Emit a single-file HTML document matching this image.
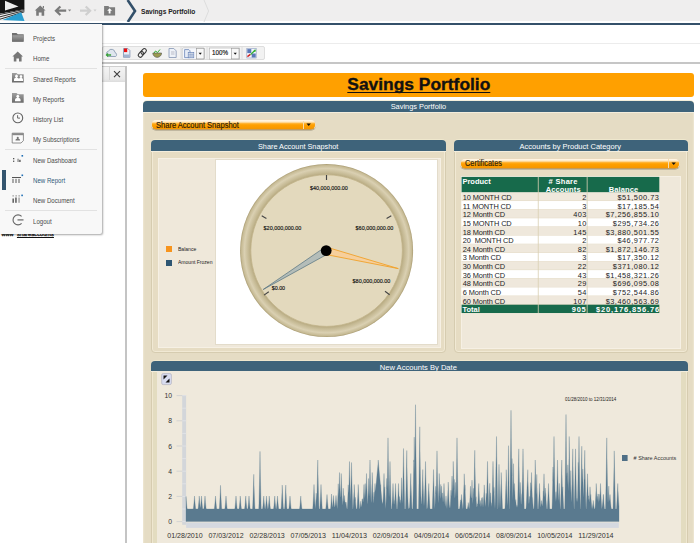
<!DOCTYPE html>
<html><head><meta charset="utf-8">
<style>
*{margin:0;padding:0;box-sizing:border-box}
html,body{width:700px;height:543px;overflow:hidden;background:#fff}
body{position:relative;font-family:"Liberation Sans",sans-serif;color:#333}
.a{position:absolute}
.t{position:absolute;white-space:nowrap;line-height:1}
</style></head><body>
<!-- top bar -->
<div class="a" style="left:0;top:0;width:700px;height:21px;background:#efeeee"></div>
<div class="a" style="left:0;top:22.5px;width:700px;height:2.2px;background:#34506a"></div>
<!-- logo -->
<svg class="a" style="left:0;top:0" width="26" height="22" viewBox="0 0 26 22">
<polygon points="0,0 24.4,0 24.4,9.2 0,13.8" fill="#141414"/>
<polygon points="0,13.8 24.4,9.2 24.4,12.5 2,21 0,21" fill="#f2f2f2"/>
<polygon points="5,0.7 18.5,6.6 5,10.6" fill="#ececec"/>
<g stroke="#1a1a1a" stroke-width="0.9">
<line x1="24.4" y1="9.4" x2="0" y2="14.4"/>
<line x1="24.4" y1="10.6" x2="0" y2="16.8"/>
<line x1="24.4" y1="11.8" x2="0" y2="19.2"/>
</g>
<polygon points="2.4,20 21.2,12.2 24.5,21" fill="#2b9fd1"/>
</svg>
<!-- nav icons -->
<svg class="a" style="left:30px;top:3px" width="100" height="16" viewBox="30 3 100 16">
<!-- home -->
<path d="M40.2,5.4 L45.6,10.6 L44.2,10.6 L44.2,15.7 L41.6,15.7 L41.6,12.6 L38.8,12.6 L38.8,15.7 L36.2,15.7 L36.2,10.6 L34.8,10.6 Z M42.8,6 h1.2 v2.6 l-1.2,-1.2z" fill="#7a7a7a"/>
<!-- back -->
<path d="M54.4,10.7 L59.6,5.7 L61.2,7.2 L58.6,9.6 L66.2,9.6 L66.2,11.8 L58.6,11.8 L61.2,14.2 L59.6,15.7 Z" fill="#7a7a7a"/>
<path d="M68,9.4 h3.2 l-1.6,2z" fill="#888"/>
<!-- forward -->
<path d="M91.7,10.7 L86.5,5.7 L84.9,7.2 L87.5,9.6 L80,9.6 L80,11.8 L87.5,11.8 L84.9,14.2 L86.5,15.7 Z" fill="#cfcfcf"/>
<path d="M93.5,9.4 h3 l-1.5,2z" fill="#ccc"/>
<!-- folder up -->
<path d="M104.1,6 h4.2 l1.2,1.3 h5.6 v8.1 h-11z" fill="#7d7d7d"/>
<path d="M109.6,8.2 l2.4,2.6 h-1.5 v2.8 h-1.8 v-2.8 h-1.5z" fill="#fff"/>
</svg>
<!-- breadcrumb chevrons -->
<svg class="a" style="left:120px;top:0" width="100" height="22" viewBox="120 0 100 22">
<path d="M127.6,0 L135,11 L127.8,22" fill="none" stroke="#33506a" stroke-width="2.6"/>
<path d="M204,0 L208.6,11 L204,22" fill="none" stroke="#dcdcdc" stroke-width="1"/>
</svg>
<div class="t" style="left:141.4px;top:8.2px;font-size:7.3px;font-weight:bold;color:#222;transform:scaleX(0.905);transform-origin:0 0">Savings Portfolio</div>

<!-- toolbar -->
<div class="a" style="left:0;top:42.6px;width:700px;height:1px;background:#ececec"></div>
<div class="a" style="left:0;top:62px;width:700px;height:1.8px;background:#c6c6c6"></div>
<div class="a" style="left:102px;top:45.8px;width:163px;height:14.6px;background:#f2f2f2;border:1px solid #dedede;border-radius:2px"></div>
<svg class="a" style="left:100px;top:44px" width="170" height="18" viewBox="100 44 170 18">
<!-- cloud -->
<path d="M108,56.5 a3,3 0 0 1 0.5,-5.5 a3.5,3.5 0 0 1 6.5,1.5 a2.3,2.3 0 0 1 0.7,4z" fill="#dfe6ee" stroke="#8c9db3" stroke-width="0.9"/>
<path d="M105.5,55 l2.6,-2.2 v1.4 h3 v1.6 h-3 v1.4z" fill="#3aa13a"/>
<!-- pdf -->
<path d="M123.5,48.5 h4.4 l2,2 v6.8 h-6.4z" fill="#e8eef6" stroke="#7c8fb0" stroke-width="0.8"/>
<rect x="124" y="48.5" width="3.2" height="3.6" fill="#e11"/>
<rect x="123.8" y="54.5" width="5.8" height="2.6" fill="#9fb3d0"/>
<!-- link -->
<g transform="rotate(-48 142.3 52.9)" fill="none" stroke="#3a3a3a" stroke-width="1.1">
<rect x="137.2" y="50.9" width="6.2" height="4" rx="2"/>
<rect x="141.2" y="50.9" width="6.2" height="4" rx="2"/>
</g>
<!-- bowl -->
<path d="M152.8,53 h8.8 a4.4,4.4 0 0 1 -8.8,0z" fill="#9a9a50" stroke="#555" stroke-width="0.6"/>
<path d="M154,53 l1.5,-2 l2,1.5 l2.5,-3" stroke="#3a3" stroke-width="1" fill="none"/>
<!-- doc -->
<path d="M169,48.5 h4.8 l2.4,2.4 v6.6 h-7.2z" fill="#eef2f8" stroke="#8494b4" stroke-width="0.8"/>
<path d="M171,52 h3.5 M171,54 h3.5" stroke="#99a" stroke-width="0.6"/>
<!-- sep -->
<line x1="181" y1="47" x2="181" y2="59.5" stroke="#d8d8d8" stroke-width="0.8"/>
<rect x="182.3" y="48" width="22" height="11.2" fill="#e6e6e6" stroke="#b5b5b5" stroke-width="0.7" rx="1"/>
<rect x="182.6" y="48.3" width="13.5" height="10.6" fill="#f5f7fb"/>
<path d="M184.6,49.6 h4.2 l1.2,1.2 v6.8 h-5.4z" fill="#e6ecf6" stroke="#5a78b0" stroke-width="0.7"/>
<rect x="188.2" y="52.6" width="5.6" height="5.2" fill="#ffffff" stroke="#5a78b0" stroke-width="0.6"/>
<path d="M188.2,54.3 h5.6 M188.2,56 h5.6 M190.1,52.6 v5.2 M192,52.6 v5.2" stroke="#5a78b0" stroke-width="0.5"/>
<rect x="196.4" y="48.3" width="7.6" height="10.6" fill="#f8f8f8" stroke="#9a9a9a" stroke-width="0.6"/>
<path d="M198.6,52.8 h3.2 l-1.6,2z" fill="#111"/>
<line x1="207" y1="47" x2="207" y2="59.5" stroke="#d8d8d8" stroke-width="0.8"/>
<rect x="209.3" y="48" width="30" height="11.2" fill="#fff" stroke="#b5b5b5" stroke-width="0.7"/>
<rect x="231.4" y="48.3" width="7.6" height="10.6" fill="#f8f8f8" stroke="#9a9a9a" stroke-width="0.6"/>
<path d="M233.6,52.8 h3.2 l-1.6,2z" fill="#111"/>
<line x1="242" y1="47" x2="242" y2="59.5" stroke="#d8d8d8" stroke-width="0.8"/>
<rect x="246.8" y="48.6" width="9.4" height="9.4" fill="#f4f6fb" stroke="#8a9cc0" stroke-width="0.6"/>
<rect x="247.3" y="49.1" width="4" height="4" fill="#5a78b8"/>
<rect x="251.7" y="53.5" width="4" height="4" fill="#5a78b8"/>
<path d="M247.4,56.6 l3,-2.2" stroke="#d02020" stroke-width="1.4"/>
<path d="M250.6,54.6 l4.6,-4.6" stroke="#30b030" stroke-width="1.3"/>
<path d="M255.6,49.2 v2.6 h-2.6z" fill="#30b030"/>
</svg>
<div class="t" style="left:211.6px;top:50.4px;font-size:6.6px;color:#111;-webkit-text-stroke:0.15px #111;transform:scaleX(0.95);transform-origin:0 0">100%</div>

<!-- left panel -->
<div class="a" style="left:0;top:66px;width:126.5px;height:16px;background:linear-gradient(#f4f4f4,#e9e9e9 80%,#dcdcdc);border-top:1px solid #cfcfcf"></div>
<div class="a" style="left:109px;top:67px;width:0.8px;height:13px;background:#d6d6d6"></div>
<svg class="a" style="left:112px;top:69px" width="10" height="10" viewBox="112 69 10 10">
<path d="M114,71.2 L120,77.2 M120,71.2 L114,77.2" stroke="#404040" stroke-width="1.15"/>
</svg>
<div class="a" style="left:125px;top:66px;width:1.8px;height:477px;background:#c4c4c4"></div>
<div class="t" style="left:1.5px;top:232.4px;font-size:5.6px;color:#111;-webkit-text-stroke:0.25px #111">www<u style="margin-left:3.3px;letter-spacing:0.05px">shareaccounts</u></div>

<!-- dropdown menu -->
<div class="a" style="left:0;top:24px;width:102px;height:210px;background:#f8f8f8;border-radius:0 0 2px 0;box-shadow:1px 1px 2px rgba(0,0,0,0.35)"></div>
<div class="a" style="left:5px;top:68.2px;width:92px;height:0.8px;background:#e2e2e2"></div>
<div class="a" style="left:5px;top:149.3px;width:92px;height:0.8px;background:#e2e2e2"></div>
<div class="a" style="left:5px;top:210px;width:92px;height:0.8px;background:#e2e2e2"></div>
<div class="a" style="left:2.3px;top:170.2px;width:4px;height:19.4px;background:#34556f"></div>
<svg class="a" style="left:0;top:24px" width="30" height="206" viewBox="0 24 30 206">
<defs><linearGradient id="ig" x1="0" y1="0" x2="0" y2="1"><stop offset="0" stop-color="#a0a0a0"/><stop offset="1" stop-color="#6a6a6a"/></linearGradient></defs>
<!-- projects folder -->
<path d="M12,33 h4.5 l1.3,1.2 h5.9 v7.6 h-11.7z" fill="#6f6f6f"/>
<path d="M12.3,35.2 h11.1 v6.4 h-11.1z" fill="url(#ig)"/>
<!-- home -->
<path d="M17.7,51.4 L23,56.6 L21.6,56.6 L21.6,61.6 L19,61.6 L19,58.6 L16.4,58.6 L16.4,61.6 L13.8,61.6 L13.8,56.6 L12.4,56.6 Z" fill="#777"/>
<!-- shared reports -->
<path d="M12,73 h4.5 l1.3,1.2 h5.9 v8.3 h-11.7z" fill="url(#ig)"/>
<path d="M14,81 v-1.5 q0,-1.5 2,-2 a1.4,1.4 0 1 1 1,0 q2,0.5 2,2 v1.5z M18.5,81 v-1.5 q0,-1.3 2,-1.8 a1.3,1.3 0 1 1 1,0 q1.5,0.5 1.5,1.8 v1.5z" fill="#fff"/>
<!-- my reports -->
<path d="M12,93 h4.5 l1.3,1.2 h5.9 v8.5 h-11.7z" fill="url(#ig)"/>
<path d="M15,101.3 v-1.5 q0,-1.6 2.2,-2.1 a1.5,1.5 0 1 1 1.2,0 q2.2,0.5 2.2,2.1 v1.5z" fill="#fff"/>
<!-- clock -->
<circle cx="17.8" cy="117.9" r="4.9" fill="none" stroke="#666" stroke-width="1.1"/>
<path d="M17.6,115.2 v2.9 h2.4" fill="none" stroke="#666" stroke-width="1"/>
<!-- subscriptions -->
<path d="M12.2,133.2 h11.2 v7.5 l-2.4,2.3 h-8.8z" fill="#fafafa" stroke="#777" stroke-width="0.8"/>
<rect x="12.2" y="133.2" width="11.2" height="2" fill="#888"/>
<path d="M15.5,140.5 h4.5 v-0.8 q-0.5,-1 -1.6,-1.2 a1,1 0 1 0 -1.3,0 q-1.1,0.2 -1.6,1.2z" fill="#777"/>
<!-- new dashboard -->
<rect x="13" y="158" width="1.3" height="1.3" fill="#555"/>
<rect x="13" y="160.6" width="1.3" height="1.3" fill="#555"/>
<rect x="17.5" y="158.7" width="1.1" height="3.3" fill="#777"/>
<rect x="19.2" y="159.8" width="1.4" height="2.2" fill="#555"/>
<rect x="21.5" y="155" width="1.6" height="1.6" fill="#1f6fb5"/>
<!-- new report -->
<rect x="12" y="177" width="9" height="1" fill="#555"/>
<rect x="12.3" y="178.8" width="1.4" height="4.2" fill="#888"/>
<rect x="15.3" y="178.8" width="1.4" height="4.2" fill="#888"/>
<rect x="18.3" y="178.8" width="1.4" height="4.2" fill="#888"/>
<rect x="21.5" y="174.5" width="1.6" height="1.6" fill="#1f6fb5"/>
<!-- new document -->
<rect x="12.6" y="195.4" width="1" height="1" fill="#555"/>
<rect x="15.6" y="195.4" width="1" height="1" fill="#555"/>
<rect x="18.6" y="195.4" width="1" height="1" fill="#555"/>
<rect x="12.5" y="198.5" width="1.3" height="4.3" fill="#444"/>
<rect x="15.3" y="197.5" width="1.3" height="5.3" fill="#444"/>
<rect x="18.4" y="197.5" width="1.3" height="5.3" fill="#999"/>
<rect x="21.3" y="194.6" width="1.6" height="1.6" fill="#1f6fb5"/>
<!-- logout -->
<path d="M21.6,216.4 A5,5 0 1 0 21.6,223.4" fill="none" stroke="#666" stroke-width="1.1"/>
<path d="M17.5,219.9 h6" stroke="#666" stroke-width="1.2"/>
</svg>
<div class="t" style="left:33.1px;top:35.85px;font-size:6.9px;transform:scaleX(0.885);transform-origin:0 0;color:#4a4a4a">Projects</div>
<div class="t" style="left:33.1px;top:56.45px;font-size:6.9px;transform:scaleX(0.885);transform-origin:0 0;color:#4a4a4a">Home</div>
<div class="t" style="left:33.1px;top:77.15px;font-size:6.9px;transform:scaleX(0.885);transform-origin:0 0;color:#4a4a4a">Shared Reports</div>
<div class="t" style="left:33.1px;top:96.55px;font-size:6.9px;transform:scaleX(0.885);transform-origin:0 0;color:#4a4a4a">My Reports</div>
<div class="t" style="left:33.1px;top:116.85px;font-size:6.9px;transform:scaleX(0.885);transform-origin:0 0;color:#4a4a4a">History List</div>
<div class="t" style="left:33.1px;top:136.75px;font-size:6.9px;transform:scaleX(0.885);transform-origin:0 0;color:#4a4a4a">My Subscriptions</div>
<div class="t" style="left:33.1px;top:157.95px;font-size:6.9px;transform:scaleX(0.885);transform-origin:0 0;color:#4a4a4a">New Dashboard</div>
<div class="t" style="left:33.1px;top:177.75px;font-size:6.9px;transform:scaleX(0.885);transform-origin:0 0;color:#2f5878">New Report</div>
<div class="t" style="left:33.1px;top:197.95px;font-size:6.9px;transform:scaleX(0.885);transform-origin:0 0;color:#4a4a4a">New Document</div>
<div class="t" style="left:33.1px;top:218.55px;font-size:6.9px;transform:scaleX(0.885);transform-origin:0 0;color:#4a4a4a">Logout</div>

<!-- main content -->
<div class="a" style="left:143px;top:73px;width:551px;height:24px;background:#ffa000;border-radius:3px"></div>
<div class="t" style="left:347.3px;top:76px;font-size:17.4px;font-weight:bold;color:#111;text-decoration:underline;text-decoration-thickness:1.1px;text-underline-offset:2.2px;text-decoration-skip-ink:none;-webkit-text-stroke:0.35px #111">Savings Portfolio</div>

<div class="a" style="left:143.3px;top:101px;width:550.7px;height:442px;background:#e5dcc4;border-radius:4px 4px 0 0;box-shadow:inset 1.2px 0 0 #ece4cf,inset -1.2px 0 0 #ece4cf"></div>
<div class="a" style="left:144.3px;top:111.6px;width:548.7px;height:1.2px;background:#efe8d6"></div>
<div class="a" style="left:143.3px;top:101px;width:550.7px;height:10.6px;background:#3e637a;border-radius:4px 4px 0 0;box-shadow:0 -0.8px 0 #f1ead0,0 0.9px 0 #f3eddc"></div>
<div class="t" style="left:390.7px;top:103px;font-size:7.4px;color:#fff">Savings Portfolio</div>

<!-- select 1 -->
<div class="a" style="left:150.5px;top:118.9px;width:165px;height:11.5px;border-radius:5px;background:linear-gradient(#fff8ec 0%,#ffe8c0 22%,#ffb02c 40%,#ffa000 55%,#f59600 100%);border:0.8px solid #eadbc0;border-bottom-color:#c49a58;box-shadow:0 0.7px 0 rgba(120,110,90,0.45)"></div>
<div class="t" style="left:155.9px;top:121.3px;font-size:8.5px;transform:scaleX(0.886);transform-origin:0 0;color:#2a1c08;-webkit-text-stroke:0.15px #2a1c08">Share Account Snapshot</div>
<div class="a" style="left:303px;top:120.5px;width:0.8px;height:8.5px;background:#f6dcb0"></div>
<svg class="a" style="left:306px;top:123.3px" width="6" height="4"><path d="M0.5,0.5 h4.4 l-2.2,2.6z" fill="#111"/></svg>

<!-- gauge panel -->
<div class="a" style="left:150.8px;top:140px;width:295.4px;height:213px;background:#e6dcc3;border:1px solid #d6ccb0;border-radius:4px;box-shadow:inset 0 0 0 1px #f1e9d4"></div>
<div class="a" style="left:150.8px;top:140px;width:295.4px;height:10.6px;background:#3e637a;border-radius:4px 4px 0 0;box-shadow:0 -0.8px 0 #f1ead0,0 0.9px 0 #f3eddc"></div>
<div class="t" style="left:258px;top:143px;font-size:7.3px;color:#fff">Share Account Snapshot</div>
<div class="a" style="left:157.5px;top:157.5px;width:283.5px;height:190.5px;background:#efe8da;border:1px solid #f6f0e4"></div>
<div class="a" style="left:215px;top:159.3px;width:222.5px;height:185.4px;background:#fff;border:0.8px solid #e3dccb"></div>
<div class="a" style="left:166.4px;top:245.9px;width:5.7px;height:6px;background:#f7941d"></div>
<div class="a" style="left:166.4px;top:259.9px;width:5.7px;height:5.7px;background:#2e5673"></div>
<div class="t" style="left:177.9px;top:245.7px;font-size:6px;transform:scaleX(0.84);transform-origin:0 0;color:#1a1a1a">Balance</div>
<div class="a" style="left:177.9px;top:258px;width:37.1px;height:9px;overflow:hidden"><div class="t" style="left:0;top:1.4px;font-size:6px;transform:scaleX(0.84);transform-origin:0 0;color:#1a1a1a">Amount Frozen</div></div>
<svg class="a" style="left:215px;top:159.5px" width="222" height="185" viewBox="215 159.5 222 185">
<defs>
<radialGradient id="rg" cx="50%" cy="50%" r="50%">
<stop offset="0.87" stop-color="#b3a57c"/>
<stop offset="0.9" stop-color="#c4b892"/>
<stop offset="0.95" stop-color="#dad0b2"/>
<stop offset="0.985" stop-color="#c6ba94"/>
<stop offset="1" stop-color="#a89a70"/>
</radialGradient>
</defs>
<circle cx="326.6" cy="250.1" r="86.5" fill="url(#rg)"/>
<circle cx="326.6" cy="250.1" r="75.8" fill="#e3d9bd" stroke="#c2b48a" stroke-width="0.8"/>
<g stroke="#444" stroke-width="1.15">
<line x1="326.5" y1="174.5" x2="326.5" y2="179.5"/>
<line x1="261.7" y1="215.3" x2="266.4" y2="218"/>
<line x1="391.3" y1="215.3" x2="386.6" y2="218"/>
<line x1="264" y1="294.6" x2="268.8" y2="291.3"/>
<line x1="389.6" y1="294.2" x2="385" y2="290.8"/>
</g>
<g font-family="Liberation Sans" font-size="6.2" fill="#111" stroke="#111" stroke-width="0.15">
<text x="310" y="189.6" textLength="37.8" lengthAdjust="spacingAndGlyphs">$40,000,000.00</text>
<text x="263.6" y="229.8" textLength="37.8" lengthAdjust="spacingAndGlyphs">$20,000,000.00</text>
<text x="355.6" y="229.8" textLength="37.8" lengthAdjust="spacingAndGlyphs">$60,000,000.00</text>
<text x="352.6" y="282.9" textLength="37.8" lengthAdjust="spacingAndGlyphs">$80,000,000.00</text>
<text x="271.7" y="289" textLength="13.4" lengthAdjust="spacingAndGlyphs">$0.00</text>
</g>
<polygon points="324.2,247.2 328.5,253 263.2,289" fill="#b4bdb9" stroke="#52707e" stroke-width="0.7" stroke-linejoin="round"/>
<polygon points="326.5,246.6 326.8,254.2 398.3,268.1" fill="#f6cf9c" stroke="#f0a22a" stroke-width="0.9" stroke-linejoin="round"/>
<circle cx="326.2" cy="250.1" r="5.4" fill="#000"/>
</svg>

<!-- table panel -->
<div class="a" style="left:454px;top:140px;width:234px;height:213px;background:#e6dcc3;border:1px solid #d6ccb0;border-radius:4px;box-shadow:inset 0 0 0 1px #f1e9d4"></div>
<div class="a" style="left:454px;top:140px;width:234px;height:10.6px;background:#3e637a;border-radius:4px 4px 0 0;box-shadow:0 -0.8px 0 #f1ead0,0 0.9px 0 #f3eddc"></div>
<div class="t" style="left:519.6px;top:143px;font-size:7.5px;color:#fff">Accounts by Product Category</div>
<div class="a" style="left:460px;top:158.3px;width:220.2px;height:10.9px;border-radius:5px;background:linear-gradient(#fff8ec 0%,#ffe8c0 22%,#ffb02c 40%,#ffa000 55%,#f59600 100%);border:0.8px solid #eadbc0;border-bottom-color:#c49a58;box-shadow:0 0.7px 0 rgba(120,110,90,0.45)"></div>
<div class="t" style="left:465px;top:159.4px;font-size:8.8px;transform:scaleX(0.84);transform-origin:0 0;color:#2a1c08;-webkit-text-stroke:0.15px #2a1c08">Certificates</div>
<div class="a" style="left:667.6px;top:159.4px;width:0.8px;height:8.6px;background:#f6dcb0"></div>
<svg class="a" style="left:671.4px;top:161.8px" width="6" height="4"><path d="M0.5,0.5 h4.4 l-2.2,2.6z" fill="#111"/></svg>
<div class="a" style="left:460.5px;top:176px;width:220px;height:172.5px;background:#efe8da;border:1px solid #f6f0e4"></div>
<svg class="a" style="left:455px;top:170px" width="210" height="150" viewBox="455 170 210 150">
<rect x="461.6" y="176.9" width="197.70" height="15.50" fill="#176a4b"/>
<rect x="461.6" y="192.40" width="197.70" height="8.64" fill="#efe8dc"/>
<rect x="461.6" y="200.54" width="197.70" height="0.7" fill="#e2d9c2"/>
<rect x="461.6" y="201.04" width="197.70" height="8.64" fill="#ffffff"/>
<rect x="461.6" y="209.18" width="197.70" height="0.7" fill="#e2d9c2"/>
<rect x="461.6" y="209.68" width="197.70" height="8.64" fill="#efe8dc"/>
<rect x="461.6" y="217.82" width="197.70" height="0.7" fill="#e2d9c2"/>
<rect x="461.6" y="218.32" width="197.70" height="8.64" fill="#ffffff"/>
<rect x="461.6" y="226.46" width="197.70" height="0.7" fill="#e2d9c2"/>
<rect x="461.6" y="226.96" width="197.70" height="8.64" fill="#efe8dc"/>
<rect x="461.6" y="235.10" width="197.70" height="0.7" fill="#e2d9c2"/>
<rect x="461.6" y="235.60" width="197.70" height="8.64" fill="#ffffff"/>
<rect x="461.6" y="243.74" width="197.70" height="0.7" fill="#e2d9c2"/>
<rect x="461.6" y="244.24" width="197.70" height="8.64" fill="#efe8dc"/>
<rect x="461.6" y="252.38" width="197.70" height="0.7" fill="#e2d9c2"/>
<rect x="461.6" y="252.88" width="197.70" height="8.64" fill="#ffffff"/>
<rect x="461.6" y="261.02" width="197.70" height="0.7" fill="#e2d9c2"/>
<rect x="461.6" y="261.52" width="197.70" height="8.64" fill="#efe8dc"/>
<rect x="461.6" y="269.66" width="197.70" height="0.7" fill="#e2d9c2"/>
<rect x="461.6" y="270.16" width="197.70" height="8.64" fill="#ffffff"/>
<rect x="461.6" y="278.30" width="197.70" height="0.7" fill="#e2d9c2"/>
<rect x="461.6" y="278.80" width="197.70" height="8.64" fill="#efe8dc"/>
<rect x="461.6" y="286.94" width="197.70" height="0.7" fill="#e2d9c2"/>
<rect x="461.6" y="287.44" width="197.70" height="8.64" fill="#ffffff"/>
<rect x="461.6" y="295.58" width="197.70" height="0.7" fill="#e2d9c2"/>
<rect x="461.6" y="296.08" width="197.70" height="8.64" fill="#efe8dc"/>
<rect x="461.6" y="304.22" width="197.70" height="0.7" fill="#e2d9c2"/>
<rect x="461.6" y="304.72" width="197.70" height="8.3" fill="#176a4b"/>
<rect x="537.8000000000001" y="176.9" width="0.9" height="136.12" fill="#d9cfb3" opacity="0.9"/>
<rect x="586.7" y="176.9" width="0.9" height="136.12" fill="#d9cfb3" opacity="0.9"/>
<g font-family="Liberation Sans" fill="#222" font-size="7.4">
<text x="462.8" y="200.00" letter-spacing="-0.12">10 MONTH CD</text>
<text x="586.6" y="200.00" text-anchor="end" letter-spacing="0.3">2</text>
<text x="659.4" y="200.00" text-anchor="end" letter-spacing="0.5">$51,500.73</text>
<text x="462.8" y="208.64" letter-spacing="-0.12">11 MONTH CD</text>
<text x="586.6" y="208.64" text-anchor="end" letter-spacing="0.3">3</text>
<text x="659.4" y="208.64" text-anchor="end" letter-spacing="0.5">$17,185.54</text>
<text x="462.8" y="217.28" letter-spacing="-0.12">12 Month CD</text>
<text x="586.6" y="217.28" text-anchor="end" letter-spacing="0.3">403</text>
<text x="659.4" y="217.28" text-anchor="end" letter-spacing="0.5">$7,256,855.10</text>
<text x="462.8" y="225.92" letter-spacing="-0.12">15 MONTH CD</text>
<text x="586.6" y="225.92" text-anchor="end" letter-spacing="0.3">10</text>
<text x="659.4" y="225.92" text-anchor="end" letter-spacing="0.5">$295,734.26</text>
<text x="462.8" y="234.56" letter-spacing="-0.12">18 Month CD</text>
<text x="586.6" y="234.56" text-anchor="end" letter-spacing="0.3">145</text>
<text x="659.4" y="234.56" text-anchor="end" letter-spacing="0.5">$3,880,501.55</text>
<text x="462.8" y="243.20" letter-spacing="-0.12">20&#160; MONTH CD</text>
<text x="586.6" y="243.20" text-anchor="end" letter-spacing="0.3">2</text>
<text x="659.4" y="243.20" text-anchor="end" letter-spacing="0.5">$46,977.72</text>
<text x="462.8" y="251.84" letter-spacing="-0.12">24 Month CD</text>
<text x="586.6" y="251.84" text-anchor="end" letter-spacing="0.3">82</text>
<text x="659.4" y="251.84" text-anchor="end" letter-spacing="0.5">$1,872,146.73</text>
<text x="462.8" y="260.48" letter-spacing="-0.12">3 Month CD</text>
<text x="586.6" y="260.48" text-anchor="end" letter-spacing="0.3">3</text>
<text x="659.4" y="260.48" text-anchor="end" letter-spacing="0.5">$17,350.12</text>
<text x="462.8" y="269.12" letter-spacing="-0.12">30 Month CD</text>
<text x="586.6" y="269.12" text-anchor="end" letter-spacing="0.3">22</text>
<text x="659.4" y="269.12" text-anchor="end" letter-spacing="0.5">$371,080.12</text>
<text x="462.8" y="277.76" letter-spacing="-0.12">36 Month CD</text>
<text x="586.6" y="277.76" text-anchor="end" letter-spacing="0.3">43</text>
<text x="659.4" y="277.76" text-anchor="end" letter-spacing="0.5">$1,458,321.26</text>
<text x="462.8" y="286.40" letter-spacing="-0.12">48 Month CD</text>
<text x="586.6" y="286.40" text-anchor="end" letter-spacing="0.3">29</text>
<text x="659.4" y="286.40" text-anchor="end" letter-spacing="0.5">$696,095.08</text>
<text x="462.8" y="295.04" letter-spacing="-0.12">6 Month CD</text>
<text x="586.6" y="295.04" text-anchor="end" letter-spacing="0.3">54</text>
<text x="659.4" y="295.04" text-anchor="end" letter-spacing="0.5">$752,544.86</text>
<text x="462.8" y="303.68" letter-spacing="-0.12">60 Month CD</text>
<text x="586.6" y="303.68" text-anchor="end" letter-spacing="0.3">107</text>
<text x="659.4" y="303.68" text-anchor="end" letter-spacing="0.5">$3,460,563.69</text>
</g>
<g font-family="Liberation Sans" fill="#fff" font-weight="bold" font-size="7.5">
<text x="462.4" y="183.7">Product</text>
<text x="563.2" y="183.7" text-anchor="middle" letter-spacing="0.3"># Share</text>
<text x="563.2" y="191.7" text-anchor="middle" letter-spacing="0.1">Accounts</text>
<text x="623.5" y="191.7" text-anchor="middle" letter-spacing="0.1">Balance</text>
<text x="462.4" y="312.02">Total</text>
<text x="586.6" y="312.02" text-anchor="end" letter-spacing="0.8">905</text>
<text x="660" y="312.02" text-anchor="end" letter-spacing="0.85">$20,176,856.76</text>
</g></svg>

<!-- chart panel -->
<div class="a" style="left:150.8px;top:360.6px;width:537px;height:190px;background:#e3dcc0;border:1px solid #d6ccb0;border-radius:4px;box-shadow:inset 0 0 0 1px #efe7d0"></div>
<div class="a" style="left:150.8px;top:360.6px;width:537px;height:10.8px;background:#3e637a;border-radius:4px 4px 0 0;box-shadow:0 -0.8px 0 #f1ead0,0 0.9px 0 #f3eddc"></div>
<div class="t" style="left:379.7px;top:364px;font-size:7.6px;color:#fff">New Accounts By Date</div>
<div class="a" style="left:156.5px;top:371.4px;width:524px;height:180px;background:#efe9dc"></div>
<svg class="a" style="left:150px;top:371px" width="540" height="172" viewBox="150 371 540 172">
<rect x="161.7" y="373.6" width="9.7" height="11" rx="1.5" fill="#d8dcf0" stroke="#aab" stroke-width="0.6"/>
<path d="M163.5,375.5 l4,0 l-4,4z M169.5,382.5 l-4,0 l4,-4z" fill="#111"/>
<rect x="182.2" y="395" width="3.9" height="129.8" fill="#d3d6da"/>
<g stroke="#e8eaec" stroke-width="0.6">
<line x1="182.2" y1="521.6" x2="186.1" y2="521.6"/>
<line x1="182.2" y1="509.0" x2="186.1" y2="509.0"/>
<line x1="182.2" y1="496.4" x2="186.1" y2="496.4"/>
<line x1="182.2" y1="483.8" x2="186.1" y2="483.8"/>
<line x1="182.2" y1="471.2" x2="186.1" y2="471.2"/>
<line x1="182.2" y1="458.6" x2="186.1" y2="458.6"/>
<line x1="182.2" y1="446.0" x2="186.1" y2="446.0"/>
<line x1="182.2" y1="433.4" x2="186.1" y2="433.4"/>
<line x1="182.2" y1="420.8" x2="186.1" y2="420.8"/>
<line x1="182.2" y1="408.2" x2="186.1" y2="408.2"/>
<line x1="182.2" y1="395.6" x2="186.1" y2="395.6"/>
</g>
<rect x="186.1" y="522.6" width="432.7" height="5.3" fill="#d5d9e0"/>
<path d="M186.00,521.6 L186.00,496.4 L186.25,500.1 L186.50,502.9 L186.75,505.4 L187.00,507.7 L187.25,509.0 L193.25,509.0 L193.50,507.6 L193.75,505.2 L194.00,502.7 L194.25,499.8 L194.50,496.0 L194.75,499.8 L195.00,502.7 L195.25,505.2 L195.50,507.6 L195.75,509.0 L198.00,509.0 L198.25,507.6 L198.50,505.2 L198.75,502.7 L199.00,499.8 L199.25,496.0 L199.50,499.8 L199.75,502.7 L200.00,505.2 L200.25,507.6 L200.50,507.6 L200.75,505.2 L201.00,502.7 L201.25,499.8 L201.50,496.0 L201.75,499.8 L202.00,502.7 L202.25,505.2 L202.50,507.6 L202.75,509.0 L203.75,509.0 L204.00,507.6 L204.25,505.2 L204.50,502.7 L204.75,499.8 L205.00,496.0 L205.25,499.8 L205.50,502.7 L205.75,505.2 L206.00,507.6 L206.25,509.0 L214.25,509.0 L214.50,507.6 L214.75,505.2 L215.00,502.7 L215.25,499.8 L215.50,496.0 L215.75,499.8 L216.00,502.7 L216.25,505.2 L216.50,507.6 L216.75,509.0 L219.25,509.0 L219.50,506.5 L219.75,502.1 L220.00,497.5 L220.25,492.3 L220.50,485.3 L220.75,492.3 L221.00,497.5 L221.25,502.1 L221.50,506.5 L221.75,509.0 L224.75,509.0 L225.00,507.6 L225.25,505.2 L225.50,502.7 L225.75,499.8 L226.00,496.0 L226.25,499.8 L226.50,502.7 L226.75,505.2 L227.00,507.6 L227.25,509.0 L234.75,509.0 L235.00,507.6 L235.25,505.2 L235.50,502.7 L235.75,499.8 L236.00,496.0 L236.25,499.8 L236.50,502.7 L236.75,505.2 L237.00,507.6 L237.25,509.0 L239.00,509.0 L239.25,507.6 L239.50,505.2 L239.75,502.7 L240.00,499.8 L240.25,496.0 L240.50,499.8 L240.75,502.7 L241.00,505.2 L241.25,507.6 L241.50,509.0 L244.50,509.0 L244.75,507.6 L245.00,505.2 L245.25,502.7 L245.50,499.8 L245.75,496.0 L246.00,499.8 L246.25,502.7 L246.50,505.2 L246.75,507.6 L247.00,509.0 L247.75,509.0 L248.00,507.6 L248.25,505.2 L248.50,502.7 L248.75,499.8 L249.00,496.0 L249.25,499.8 L249.50,502.7 L249.75,505.2 L250.00,507.6 L250.25,509.0 L252.50,509.0 L252.75,505.3 L253.00,499.0 L253.25,492.1 L253.50,484.5 L253.75,474.3 L254.00,484.5 L254.25,492.1 L254.50,499.0 L254.75,505.3 L255.00,509.0 L258.75,509.0 L259.00,502.9 L259.25,492.3 L259.50,481.0 L259.75,468.4 L260.00,451.4 L260.25,468.4 L260.50,481.0 L260.75,492.3 L261.00,502.9 L261.25,509.0 L262.50,509.0 L262.75,507.6 L263.00,505.2 L263.25,502.7 L263.50,499.8 L263.75,496.0 L264.00,499.8 L264.25,502.7 L264.50,505.2 L264.75,507.6 L265.00,509.0 L265.25,509.0 L265.50,507.6 L265.75,505.2 L266.00,502.7 L266.25,499.8 L266.50,496.0 L266.75,499.8 L267.00,502.7 L267.25,505.2 L267.50,507.6 L267.75,509.0 L268.00,509.0 L268.25,507.6 L268.50,505.2 L268.75,502.7 L269.00,499.8 L269.25,496.0 L269.50,499.8 L269.75,502.7 L270.00,505.2 L270.25,507.6 L270.50,509.0 L273.50,509.0 L273.75,507.6 L274.00,505.2 L274.25,502.7 L274.50,499.8 L274.75,496.0 L275.00,499.8 L275.25,502.7 L275.50,505.2 L275.75,507.6 L276.00,509.0 L276.25,509.0 L276.50,507.6 L276.75,505.2 L277.00,502.7 L277.25,499.8 L277.50,496.0 L277.75,499.8 L278.00,502.7 L278.25,505.2 L278.50,507.6 L278.75,509.0 L281.00,509.0 L281.25,506.5 L281.50,502.0 L281.75,497.3 L282.00,492.1 L282.25,485.0 L282.50,492.1 L282.75,497.3 L283.00,502.0 L283.25,506.5 L283.50,509.0 L284.50,509.0 L284.75,506.5 L285.00,502.0 L285.25,497.3 L285.50,492.1 L285.75,485.0 L286.00,492.1 L286.25,497.3 L286.50,502.0 L286.75,506.5 L287.00,509.0 L288.75,509.0 L289.00,507.6 L289.25,505.2 L289.50,502.7 L289.75,499.8 L290.00,496.0 L290.25,499.8 L290.50,502.7 L290.75,505.2 L291.00,507.6 L291.25,509.0 L299.50,509.0 L299.75,507.6 L300.00,505.2 L300.25,502.7 L300.50,499.8 L300.75,496.0 L301.00,499.8 L301.25,502.7 L301.50,505.2 L301.75,507.6 L302.00,509.0 L312.75,509.0 L313.00,505.0 L313.25,500.8 L313.50,496.3 L313.75,491.3 L314.00,484.5 L314.25,491.3 L314.50,496.3 L314.75,500.8 L315.00,505.0 L315.25,509.0 L315.50,506.3 L315.75,502.7 L316.00,498.7 L316.25,493.2 L316.50,498.7 L316.75,501.0 L317.00,492.6 L317.25,483.5 L317.50,473.5 L317.75,460.0 L318.00,473.5 L318.25,483.5 L318.50,492.6 L318.75,501.0 L319.00,509.0 L319.75,509.0 L320.00,505.0 L320.25,500.8 L320.50,496.3 L320.75,491.3 L321.00,484.5 L321.25,491.3 L321.50,496.3 L321.75,500.8 L322.00,505.0 L322.25,509.0 L325.75,509.0 L326.00,506.6 L326.25,504.1 L326.50,501.5 L326.75,498.5 L327.00,494.5 L327.25,498.5 L327.50,501.5 L327.75,504.1 L328.00,506.6 L328.25,509.0 L329.25,508.9 L330.50,509.0 L330.75,507.0 L331.00,503.4 L331.25,499.4 L331.50,494.0 L331.75,499.4 L332.00,503.4 L332.25,507.0 L332.50,506.8 L332.75,504.5 L333.00,502.0 L333.25,499.2 L333.50,495.5 L333.75,499.2 L334.00,502.0 L334.25,504.5 L334.50,506.8 L334.75,507.2 L335.00,506.3 L335.25,504.5 L335.50,502.0 L335.75,499.2 L336.00,495.5 L336.25,499.2 L336.50,502.0 L336.75,504.5 L337.00,506.8 L337.25,509.0 L337.50,504.7 L337.75,498.9 L338.00,492.4 L338.25,483.8 L338.50,492.4 L338.75,496.8 L339.00,490.0 L339.25,482.6 L339.50,472.5 L339.75,482.6 L340.00,490.0 L340.25,496.8 L340.50,497.1 L340.75,490.6 L341.00,483.3 L341.25,473.5 L341.50,483.3 L341.75,490.6 L342.00,497.1 L342.25,503.2 L342.50,505.4 L342.75,500.6 L343.00,495.3 L343.25,488.2 L343.50,495.3 L343.75,500.6 L344.00,502.0 L344.25,499.2 L344.50,495.5 L344.75,499.2 L345.00,502.0 L345.25,504.5 L345.50,502.1 L345.75,504.5 L346.00,502.1 L346.25,504.6 L346.50,506.4 L346.75,508.1 L347.00,509.0 L347.25,509.0 L347.50,504.8 L347.75,499.3 L348.00,493.1 L348.25,484.8 L348.50,491.6 L348.75,493.1 L349.00,484.3 L349.25,474.6 L349.50,461.5 L349.75,474.6 L350.00,484.3 L350.25,493.1 L350.50,501.2 L350.75,493.4 L351.00,484.8 L351.25,475.3 L351.50,462.5 L351.75,475.3 L352.00,484.8 L352.25,493.4 L352.50,501.4 L352.75,509.0 L353.00,509.0 L353.25,505.0 L353.50,500.8 L353.75,496.3 L354.00,491.3 L354.25,484.5 L354.50,491.3 L354.75,496.3 L355.00,500.8 L355.25,497.3 L355.50,501.3 L355.75,504.3 L356.00,507.0 L356.25,509.0 L357.00,509.0 L357.25,505.0 L357.50,500.8 L357.75,496.3 L358.00,491.3 L358.25,484.5 L358.50,491.3 L358.75,496.3 L359.00,500.8 L359.25,505.0 L359.50,509.0 L359.75,509.0 L360.00,507.7 L360.25,505.9 L360.50,503.9 L360.75,501.2 L361.00,503.9 L361.25,505.9 L361.50,507.3 L361.75,505.0 L362.00,502.5 L362.25,499.1 L362.50,502.4 L362.75,498.6 L363.00,502.4 L363.25,500.8 L363.50,496.3 L363.75,491.3 L364.00,484.5 L364.25,491.3 L364.50,496.3 L364.75,498.8 L365.00,492.3 L365.25,483.5 L365.50,492.3 L365.75,497.1 L366.00,490.6 L366.25,483.3 L366.50,473.5 L366.75,483.3 L367.00,490.6 L367.25,497.1 L367.50,503.2 L367.75,503.8 L368.00,496.8 L368.25,489.0 L368.50,478.5 L368.75,489.0 L369.00,496.8 L369.25,492.6 L369.50,483.5 L369.75,473.5 L370.00,460.0 L370.25,473.5 L370.50,483.5 L370.75,492.6 L371.00,501.0 L371.25,503.0 L371.50,496.8 L371.75,490.0 L372.00,482.6 L372.25,472.5 L372.50,482.6 L372.75,490.0 L373.00,496.8 L373.25,503.0 L373.50,502.3 L373.75,498.0 L374.00,492.2 L374.25,498.0 L374.50,492.4 L374.75,490.5 L375.00,483.5 L375.25,490.5 L375.50,490.5 L375.75,487.9 L376.00,485.2 L376.25,482.6 L376.50,480.0 L376.75,477.3 L377.00,474.7 L377.25,472.1 L377.50,469.4 L377.75,466.8 L378.00,464.1 L378.25,460.0 L378.50,464.1 L378.75,466.8 L379.00,469.4 L379.25,472.1 L379.50,474.7 L379.75,477.3 L380.00,480.0 L380.25,482.6 L380.50,485.2 L380.75,484.7 L381.00,490.5 L381.25,493.2 L381.50,495.8 L381.75,498.4 L382.00,501.1 L382.25,503.7 L382.50,502.6 L382.75,504.5 L383.00,501.6 L383.25,497.1 L383.50,490.6 L383.75,483.3 L384.00,473.5 L384.25,483.3 L384.50,490.6 L384.75,486.9 L385.00,494.5 L385.25,500.1 L385.50,505.2 L385.75,509.0 L386.00,503.7 L386.25,496.7 L386.50,488.9 L386.75,478.4 L387.00,488.9 L387.25,485.1 L387.50,472.1 L387.75,457.5 L388.00,437.9 L388.25,457.5 L388.50,472.1 L388.75,485.1 L389.00,497.4 L389.25,493.1 L389.50,484.3 L389.75,474.6 L390.00,461.5 L390.25,474.6 L390.50,484.3 L390.75,493.1 L391.00,501.2 L391.25,509.0 L391.75,509.0 L392.00,504.8 L392.25,500.4 L392.50,495.8 L392.75,490.5 L393.00,483.5 L393.25,490.5 L393.50,495.8 L393.75,500.4 L394.00,504.8 L394.25,503.4 L394.50,500.5 L394.75,500.4 L395.00,495.8 L395.25,490.5 L395.50,483.5 L395.75,490.5 L396.00,495.8 L396.25,500.4 L396.50,504.8 L396.75,509.0 L397.25,509.0 L397.50,504.8 L397.75,500.4 L398.00,495.8 L398.25,490.5 L398.50,483.5 L398.75,490.5 L399.00,495.8 L399.25,500.4 L399.50,496.5 L399.75,501.0 L400.00,503.0 L400.25,499.9 L400.50,503.0 L400.75,503.6 L401.00,496.5 L401.25,488.5 L401.50,477.8 L401.75,488.5 L402.00,496.5 L402.25,503.6 L402.50,499.1 L402.75,488.7 L403.00,477.6 L403.25,465.2 L403.50,448.5 L403.75,465.2 L404.00,477.6 L404.25,488.7 L404.50,499.1 L404.75,509.0 L405.50,509.0 L405.75,499.4 L406.00,489.4 L406.25,478.6 L406.50,466.6 L406.75,450.5 L407.00,466.6 L407.25,478.6 L407.50,488.9 L407.75,495.8 L408.00,500.9 L408.25,505.5 L408.50,509.0 L408.75,508.8 L409.00,508.4 L409.25,508.0 L409.50,507.4 L409.75,503.2 L410.00,497.1 L410.25,490.6 L410.50,483.3 L410.75,473.5 L411.00,483.3 L411.25,490.6 L411.50,497.1 L411.75,503.2 L412.00,509.0 L412.75,509.0 L413.00,500.5 L413.25,489.3 L413.50,476.8 L413.75,459.9 L414.00,461.9 L414.25,437.2 L414.50,461.9 L414.75,474.0 L415.00,454.8 L415.25,433.5 L415.50,404.7 L415.75,433.5 L416.00,454.8 L416.25,474.0 L416.50,491.9 L416.75,509.0 L418.50,509.0 L418.75,495.6 L419.00,481.4 L419.25,466.3 L419.50,449.5 L419.75,426.8 L420.00,449.5 L420.25,466.3 L420.50,481.1 L420.75,490.7 L421.00,497.8 L421.25,504.2 L421.50,503.8 L421.75,500.2 L422.00,495.2 L422.25,488.5 L422.50,480.4 L422.75,469.5 L423.00,480.4 L423.25,488.5 L423.50,495.7 L423.75,502.5 L424.00,505.9 L424.25,501.8 L424.50,497.2 L424.75,491.0 L425.00,484.3 L425.25,474.6 L425.50,461.5 L425.75,474.6 L426.00,484.3 L426.25,493.1 L426.50,501.2 L426.75,509.0 L427.00,508.7 L427.25,508.3 L427.50,506.9 L427.75,503.3 L428.00,499.2 L428.25,493.7 L428.50,490.5 L428.75,483.5 L429.00,490.5 L429.25,495.8 L429.50,500.4 L429.75,504.8 L430.00,509.0 L432.25,509.0 L432.50,502.5 L432.75,495.7 L433.00,488.5 L433.25,480.4 L433.50,469.5 L433.75,480.4 L434.00,488.5 L434.25,495.7 L434.50,502.5 L434.75,509.0 L435.00,505.1 L435.25,499.8 L435.50,494.0 L435.75,486.2 L436.00,494.0 L436.25,489.5 L436.50,478.8 L436.75,466.9 L437.00,450.9 L437.25,466.9 L437.50,478.8 L437.75,489.5 L438.00,499.5 L438.25,503.2 L438.50,497.1 L438.75,490.6 L439.00,483.3 L439.25,473.5 L439.50,483.3 L439.75,490.6 L440.00,497.1 L440.25,499.1 L440.50,492.9 L440.75,484.4 L441.00,492.9 L441.25,492.5 L441.50,486.2 L441.75,492.5 L442.00,497.2 L442.25,498.4 L442.50,492.9 L442.75,498.4 L443.00,502.5 L443.25,500.4 L443.50,495.8 L443.75,490.5 L444.00,483.5 L444.25,490.5 L444.50,495.8 L444.75,500.4 L445.00,504.8 L445.25,506.7 L445.50,503.7 L445.75,500.4 L446.00,495.9 L446.25,500.4 L446.50,503.7 L446.75,506.7 L447.00,509.0 L447.25,504.6 L447.50,500.0 L447.75,495.0 L448.00,489.5 L448.25,482.1 L448.50,489.5 L448.75,495.0 L449.00,500.0 L449.25,504.6 L449.50,506.3 L449.75,507.4 L450.00,508.4 L450.25,505.8 L450.50,501.5 L450.75,496.7 L451.00,490.2 L451.25,496.7 L451.50,494.8 L451.75,487.4 L452.00,476.1 L452.25,487.4 L452.50,493.0 L452.75,484.3 L453.00,474.5 L453.25,461.4 L453.50,474.5 L453.75,484.3 L454.00,489.5 L454.25,479.3 L454.50,489.5 L454.75,497.1 L455.00,498.3 L455.25,491.6 L455.50,482.4 L455.75,491.6 L456.00,497.4 L456.25,485.1 L456.50,472.1 L456.75,457.5 L457.00,437.9 L457.25,457.5 L457.50,472.1 L457.75,485.1 L458.00,497.4 L458.25,509.0 L459.50,509.0 L459.75,507.4 L460.00,505.3 L460.25,503.0 L460.50,499.9 L460.75,503.0 L461.00,501.5 L461.25,498.5 L461.50,494.5 L461.75,498.5 L462.00,501.5 L462.25,504.1 L462.50,506.6 L462.75,508.2 L463.00,509.0 L463.25,503.2 L463.50,497.2 L463.75,490.7 L464.00,483.5 L464.25,473.8 L464.50,483.5 L464.75,490.7 L465.00,484.9 L465.25,493.2 L465.50,499.3 L465.75,504.8 L466.00,509.0 L467.25,509.0 L467.50,508.1 L467.75,506.6 L468.00,504.8 L468.25,502.5 L468.50,504.8 L468.75,506.6 L469.00,508.1 L469.25,509.0 L469.50,505.3 L469.75,501.4 L470.00,497.2 L470.25,492.5 L470.50,486.2 L470.75,492.5 L471.00,497.2 L471.25,498.0 L471.50,497.4 L471.75,490.1 L472.00,480.2 L472.25,490.1 L472.50,497.4 L472.75,504.0 L473.00,500.7 L473.25,495.4 L473.50,488.3 L473.75,495.4 L474.00,489.3 L474.25,478.5 L474.50,466.5 L474.75,450.3 L475.00,466.5 L475.25,478.5 L475.50,489.3 L475.75,499.4 L476.00,496.7 L476.25,500.9 L476.50,504.1 L476.75,506.9 L477.00,507.1 L477.25,505.7 L477.50,503.8 L477.75,504.8 L478.00,500.4 L478.25,495.8 L478.50,490.5 L478.75,483.5 L479.00,490.5 L479.25,495.8 L479.50,500.4 L479.75,504.8 L480.00,503.4 L480.25,500.4 L480.50,503.4 L480.75,505.5 L481.00,507.1 L481.25,504.6 L481.50,501.9 L481.75,498.1 L482.00,501.4 L482.25,497.2 L482.50,501.4 L482.75,504.6 L483.00,507.4 L483.25,505.1 L483.50,500.9 L483.75,496.5 L484.00,491.6 L484.25,484.9 L484.50,491.6 L484.75,496.5 L485.00,500.9 L485.25,505.1 L485.50,506.9 L485.75,503.1 L486.00,498.9 L486.25,493.3 L486.50,498.0 L486.75,493.0 L487.00,484.3 L487.25,474.5 L487.50,461.4 L487.75,474.5 L488.00,484.3 L488.25,493.0 L488.50,501.2 L488.75,508.1 L489.00,504.6 L489.25,498.7 L489.50,492.1 L489.75,483.3 L490.00,492.1 L490.25,498.3 L490.50,492.8 L490.75,498.3 L491.00,502.5 L491.25,503.0 L491.50,505.2 L491.75,506.8 L492.00,501.2 L492.25,493.0 L492.50,484.3 L492.75,474.5 L493.00,461.4 L493.25,474.5 L493.50,484.3 L493.75,493.0 L494.00,487.3 L494.25,494.8 L494.50,500.3 L494.75,505.3 L495.00,509.0 L495.25,501.3 L495.50,491.0 L495.75,479.6 L496.00,464.2 L496.25,456.5 L496.50,436.5 L496.75,456.5 L497.00,471.3 L497.25,484.7 L497.50,497.1 L497.75,509.0 L498.00,509.0 L498.25,501.3 L498.50,491.1 L498.75,479.8 L499.00,464.4 L499.25,479.8 L499.50,491.1 L499.75,501.3 L500.00,508.4 L500.25,503.0 L500.50,496.8 L500.75,490.0 L501.00,482.6 L501.25,472.5 L501.50,482.6 L501.75,490.0 L502.00,496.8 L502.25,503.0 L502.50,509.0 L504.75,509.0 L505.00,507.6 L505.25,502.6 L505.50,495.8 L505.75,488.6 L506.00,480.5 L506.25,469.7 L506.50,480.5 L506.75,488.6 L507.00,495.8 L507.25,502.6 L507.50,506.1 L507.75,498.1 L508.00,483.6 L508.25,467.5 L508.50,445.7 L508.75,467.5 L509.00,483.6 L509.25,498.1 L509.50,509.0 L509.75,509.0 L510.00,492.9 L510.25,475.9 L510.50,457.7 L510.75,437.5 L511.00,410.3 L511.25,437.5 L511.50,457.7 L511.75,475.9 L512.00,458.6 L512.25,475.9 L512.50,488.7 L512.75,500.3 L513.00,490.8 L513.25,479.3 L513.50,463.7 L513.75,479.3 L514.00,490.8 L514.25,490.5 L514.50,483.5 L514.75,490.5 L515.00,495.8 L515.25,500.4 L515.50,502.8 L515.75,499.6 L516.00,502.8 L516.25,505.2 L516.50,507.4 L516.75,506.5 L517.00,505.2 L517.25,506.5 L517.50,507.6 L517.75,499.2 L518.00,488.8 L518.25,477.8 L518.50,465.5 L518.75,448.9 L519.00,465.5 L519.25,477.8 L519.50,488.8 L519.75,498.3 L520.00,491.5 L520.25,482.4 L520.50,491.5 L520.75,498.3 L521.00,504.4 L521.25,503.7 L521.50,499.9 L521.75,494.8 L522.00,493.1 L522.25,484.8 L522.50,477.8 L522.75,465.5 L523.00,448.9 L523.25,465.5 L523.50,477.8 L523.75,488.8 L524.00,499.2 L524.25,509.0 L526.00,509.0 L526.25,505.3 L526.50,500.5 L526.75,495.0 L527.00,487.7 L527.25,484.0 L527.50,480.5 L527.75,469.7 L528.00,480.5 L528.25,488.6 L528.50,495.8 L528.75,502.6 L529.00,503.9 L529.25,500.7 L529.50,496.4 L529.75,500.7 L530.00,498.4 L530.25,491.7 L530.50,482.7 L530.75,491.7 L531.00,490.0 L531.25,482.6 L531.50,472.5 L531.75,482.6 L532.00,490.0 L532.25,496.8 L532.50,498.3 L532.75,502.1 L533.00,505.0 L533.25,507.5 L533.50,509.0 L534.00,509.0 L534.25,501.0 L534.50,492.6 L534.75,483.5 L535.00,473.5 L535.25,460.0 L535.50,473.5 L535.75,483.5 L536.00,492.6 L536.25,495.1 L536.50,486.3 L536.75,474.4 L537.00,486.3 L537.25,495.1 L537.50,503.0 L537.75,509.0 L538.25,509.0 L538.50,504.8 L538.75,500.4 L539.00,495.8 L539.25,490.5 L539.50,483.5 L539.75,490.5 L540.00,495.8 L540.25,500.4 L540.50,504.8 L540.75,507.5 L541.00,505.6 L541.25,503.5 L541.50,500.6 L541.75,503.5 L542.00,503.9 L542.25,505.7 L542.50,505.9 L542.75,501.8 L543.00,497.2 L543.25,491.0 L543.50,490.7 L543.75,483.5 L544.00,473.8 L544.25,483.5 L544.50,490.7 L544.75,497.2 L545.00,495.2 L545.25,488.0 L545.50,492.4 L545.75,494.1 L546.00,499.3 L546.25,503.0 L546.50,506.4 L546.75,509.0 L547.25,509.0 L547.50,504.8 L547.75,500.4 L548.00,495.8 L548.25,490.5 L548.50,483.5 L548.75,490.5 L549.00,495.8 L549.25,500.4 L549.50,504.8 L549.75,509.0 L552.00,509.0 L552.25,501.8 L552.50,492.1 L552.75,481.4 L553.00,467.0 L553.25,481.4 L553.50,471.3 L553.75,456.5 L554.00,436.5 L554.25,456.5 L554.50,467.2 L554.75,481.3 L555.00,490.8 L555.25,497.9 L555.50,502.1 L555.75,497.7 L556.00,491.7 L556.25,497.7 L556.50,501.0 L556.75,492.6 L557.00,483.5 L557.25,473.5 L557.50,460.0 L557.75,473.5 L558.00,483.5 L558.25,492.6 L558.50,501.0 L558.75,498.7 L559.00,492.1 L559.25,483.3 L559.50,492.1 L559.75,498.7 L560.00,504.6 L560.25,509.0 L560.50,509.0 L560.75,501.0 L561.00,492.6 L561.25,483.5 L561.50,473.5 L561.75,460.0 L562.00,473.5 L562.25,483.5 L562.50,492.6 L562.75,486.9 L563.00,494.5 L563.25,500.1 L563.50,505.2 L563.75,509.0 L564.75,509.0 L565.00,493.6 L565.25,477.3 L565.50,459.9 L565.75,440.6 L566.00,414.5 L566.25,440.6 L566.50,459.9 L566.75,477.3 L567.00,472.8 L567.25,485.2 L567.50,480.0 L567.75,464.9 L568.00,480.0 L568.25,491.3 L568.50,484.7 L568.75,471.3 L569.00,456.5 L569.25,436.5 L569.50,456.5 L569.75,471.3 L570.00,484.7 L570.25,493.6 L570.50,483.8 L570.75,470.6 L571.00,483.8 L571.25,493.6 L571.50,502.4 L571.75,499.2 L572.00,488.8 L572.25,477.8 L572.50,465.5 L572.75,448.9 L573.00,465.5 L573.25,477.8 L573.50,488.8 L573.75,499.2 L574.00,509.0 L574.25,509.0 L574.50,499.2 L574.75,488.8 L575.00,477.8 L575.25,465.5 L575.50,448.9 L575.75,465.5 L576.00,477.8 L576.25,488.8 L576.50,499.2 L576.75,502.1 L577.00,498.3 L577.25,502.1 L577.50,501.0 L577.75,490.3 L578.00,478.4 L578.25,462.4 L578.50,471.3 L578.75,456.5 L579.00,436.5 L579.25,456.5 L579.50,471.3 L579.75,484.7 L580.00,497.1 L580.25,509.0 L580.50,509.0 L580.75,498.7 L581.00,487.9 L581.25,476.4 L581.50,463.5 L581.75,446.2 L582.00,463.5 L582.25,476.4 L582.50,482.7 L582.75,469.0 L583.00,482.7 L583.25,492.9 L583.50,497.5 L583.75,490.1 L584.00,480.2 L584.25,478.5 L584.50,466.5 L584.75,450.3 L585.00,466.5 L585.25,478.5 L585.50,489.3 L585.75,499.4 L586.00,509.0 L586.25,509.0 L586.50,503.2 L586.75,497.2 L587.00,490.7 L587.25,483.5 L587.50,473.8 L587.75,483.5 L588.00,490.7 L588.25,497.2 L588.50,495.8 L588.75,500.3 L589.00,498.9 L589.25,502.5 L589.50,500.1 L589.75,494.4 L590.00,486.8 L590.25,491.9 L590.50,497.7 L590.75,494.5 L591.00,498.5 L591.25,501.5 L591.50,504.1 L591.75,506.6 L592.00,509.0 L592.25,508.2 L592.50,506.7 L592.75,505.0 L593.00,502.8 L593.25,500.4 L593.50,503.4 L593.75,505.6 L594.00,507.1 L594.25,508.2 L594.50,509.0 L595.00,509.0 L595.25,504.8 L595.50,500.4 L595.75,495.8 L596.00,490.5 L596.25,483.5 L596.50,490.5 L596.75,495.8 L597.00,500.4 L597.25,496.3 L597.50,500.7 L597.75,499.3 L598.00,493.9 L598.25,499.3 L598.50,503.0 L598.75,499.2 L599.00,494.0 L599.25,496.0 L599.50,500.5 L599.75,500.4 L600.00,495.8 L600.25,490.5 L600.50,483.5 L600.75,490.5 L601.00,495.8 L601.25,500.4 L601.50,504.8 L601.75,509.0 L602.00,507.8 L602.25,506.1 L602.50,504.1 L602.75,501.5 L603.00,498.5 L603.25,494.5 L603.50,494.5 L603.75,499.7 L604.00,503.6 L604.25,506.6 L604.50,509.0 L605.50,509.0 L605.75,497.4 L606.00,485.1 L606.25,472.1 L606.50,457.5 L606.75,437.9 L607.00,457.5 L607.25,472.1 L607.50,485.1 L607.75,497.4 L608.00,503.1 L608.25,499.8 L608.50,494.0 L608.75,486.1 L609.00,494.0 L609.25,499.8 L609.50,501.5 L609.75,498.5 L610.00,494.5 L610.25,498.5 L610.50,501.5 L610.75,504.1 L611.00,506.6 L611.25,508.2 L611.50,509.0 L613.00,509.0 L613.25,499.5 L613.50,489.5 L613.75,478.8 L614.00,466.6 L614.25,450.9 L614.50,466.9 L614.75,478.8 L615.00,489.5 L615.25,499.5 L615.50,509.0 L616.50,509.0 L616.75,504.8 L617.00,500.4 L617.25,495.8 L617.50,490.5 L617.75,483.5 L618.00,490.5 L618.25,494.4 L618.50,499.4 L618.75,503.1 L619.00,506.5 L619.00,521.6 Z" fill="#5a7a8f" stroke="#5a7a8f" stroke-width="0.3" stroke-linejoin="round"/>
<g font-family="Liberation Sans" font-size="6.8" fill="#333">
<text x="172" y="524.1" text-anchor="end">0</text>
<line x1="176.5" y1="521.6" x2="182.2" y2="521.6" stroke="#c8ccd0" stroke-width="0.7"/>
<text x="172" y="498.9" text-anchor="end">2</text>
<line x1="176.5" y1="496.4" x2="182.2" y2="496.4" stroke="#c8ccd0" stroke-width="0.7"/>
<text x="172" y="473.7" text-anchor="end">4</text>
<line x1="176.5" y1="471.2" x2="182.2" y2="471.2" stroke="#c8ccd0" stroke-width="0.7"/>
<text x="172" y="448.5" text-anchor="end">6</text>
<line x1="176.5" y1="446.0" x2="182.2" y2="446.0" stroke="#c8ccd0" stroke-width="0.7"/>
<text x="172" y="423.3" text-anchor="end">8</text>
<line x1="176.5" y1="420.8" x2="182.2" y2="420.8" stroke="#c8ccd0" stroke-width="0.7"/>
<text x="172" y="398.1" text-anchor="end">10</text>
<line x1="176.5" y1="395.6" x2="182.2" y2="395.6" stroke="#c8ccd0" stroke-width="0.7"/>
<text x="167.3" y="537.8" textLength="35.3" lengthAdjust="spacingAndGlyphs">01/28/2010</text>
<text x="208.4" y="537.8" textLength="35.3" lengthAdjust="spacingAndGlyphs">07/03/2012</text>
<text x="249.5" y="537.8" textLength="35.3" lengthAdjust="spacingAndGlyphs">02/28/2013</text>
<text x="290.6" y="537.8" textLength="35.3" lengthAdjust="spacingAndGlyphs">07/05/2013</text>
<text x="331.7" y="537.8" textLength="35.3" lengthAdjust="spacingAndGlyphs">11/04/2013</text>
<text x="372.8" y="537.8" textLength="35.3" lengthAdjust="spacingAndGlyphs">02/09/2014</text>
<text x="413.9" y="537.8" textLength="35.3" lengthAdjust="spacingAndGlyphs">04/09/2014</text>
<text x="455.0" y="537.8" textLength="35.3" lengthAdjust="spacingAndGlyphs">06/05/2014</text>
<text x="496.1" y="537.8" textLength="35.3" lengthAdjust="spacingAndGlyphs">08/09/2014</text>
<text x="537.2" y="537.8" textLength="35.3" lengthAdjust="spacingAndGlyphs">10/05/2014</text>
<text x="578.3" y="537.8" textLength="35.3" lengthAdjust="spacingAndGlyphs">11/29/2014</text>
</g>
<text x="564.9" y="401" font-family="Liberation Sans" font-size="4.5" fill="#222">01/28/2010 to 12/31/2014</text>
<rect x="622" y="455" width="5.6" height="6" fill="#4f6f86"/>
<text x="633.6" y="460.4" font-family="Liberation Sans" font-size="5.45" fill="#333"># Share Accounts</text>
</svg>
</body></html>
